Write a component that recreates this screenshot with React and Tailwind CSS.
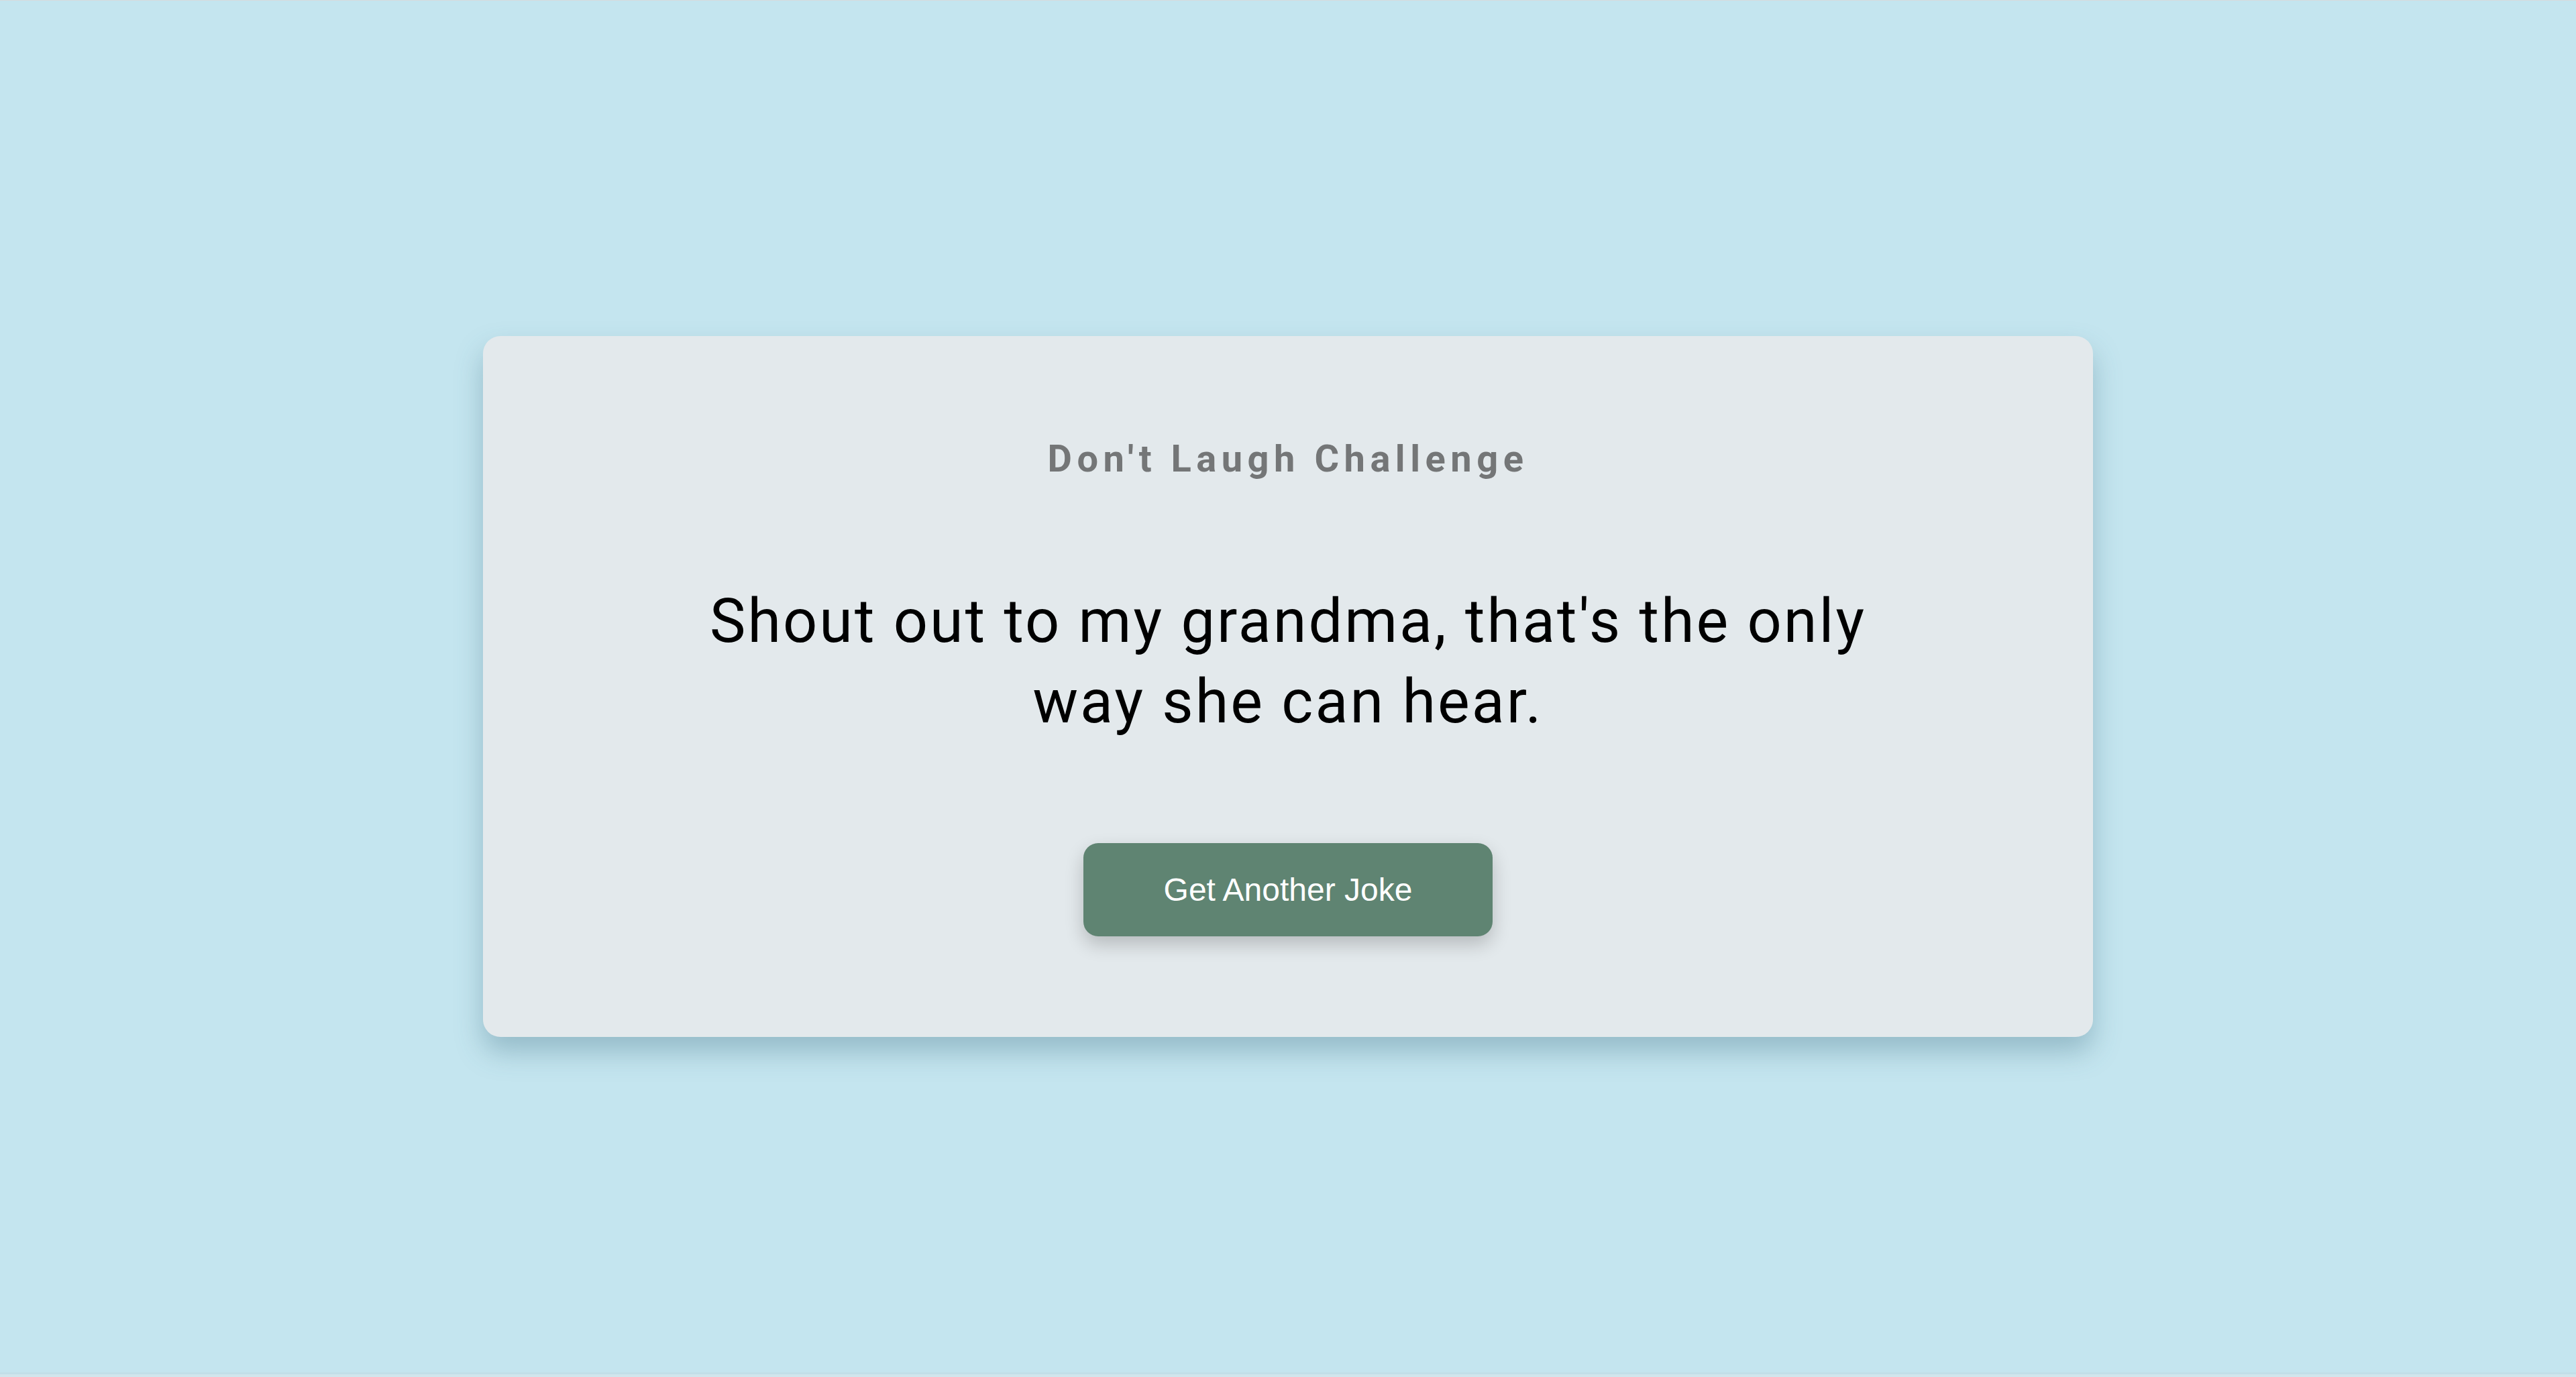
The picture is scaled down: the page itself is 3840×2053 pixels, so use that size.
const joke = "Shout out to my grandma, that's the only way she can hear.";

const App = () => {
  return (
    <div className="flex flex-col h-screen bg-[#c4e5ef] font-['Roboto',sans-serif]">
      <div className="h-px bg-[#d6dbdd]" />
      {/* Main */}
      <div className="flex-1 flex items-center justify-center">
        <div className="w-[2400px] flex flex-col items-center px-[150px] py-[150px] gap-[150px] bg-[#e3e9ec] rounded-[26px] shadow-[0_22px_40px_rgba(60,110,130,0.35)]">
          <h2 className="text-[56px] font-bold text-[#747677] tracking-[7.5px] leading-[66px]">
            Don't Laugh Challenge
          </h2>
          <p className="max-w-[1860px] text-center text-[90px] leading-[120px] text-black tracking-[3px]">
            {joke}
          </p>
          <button className="px-[120px] py-[42px] rounded-[22px] bg-[#5f8472] text-white text-[48px] leading-[55px] font-['Liberation_Sans',Arial,sans-serif] shadow-[0_12px_28px_rgba(0,0,0,0.2)]">
            Get Another Joke
          </button>
        </div>
      </div>
      <div className="h-[7px] bg-[#d0e6ed] border-t-[3px] border-[#c2dfe8]" />
    </div>
  );
};

export default App;
